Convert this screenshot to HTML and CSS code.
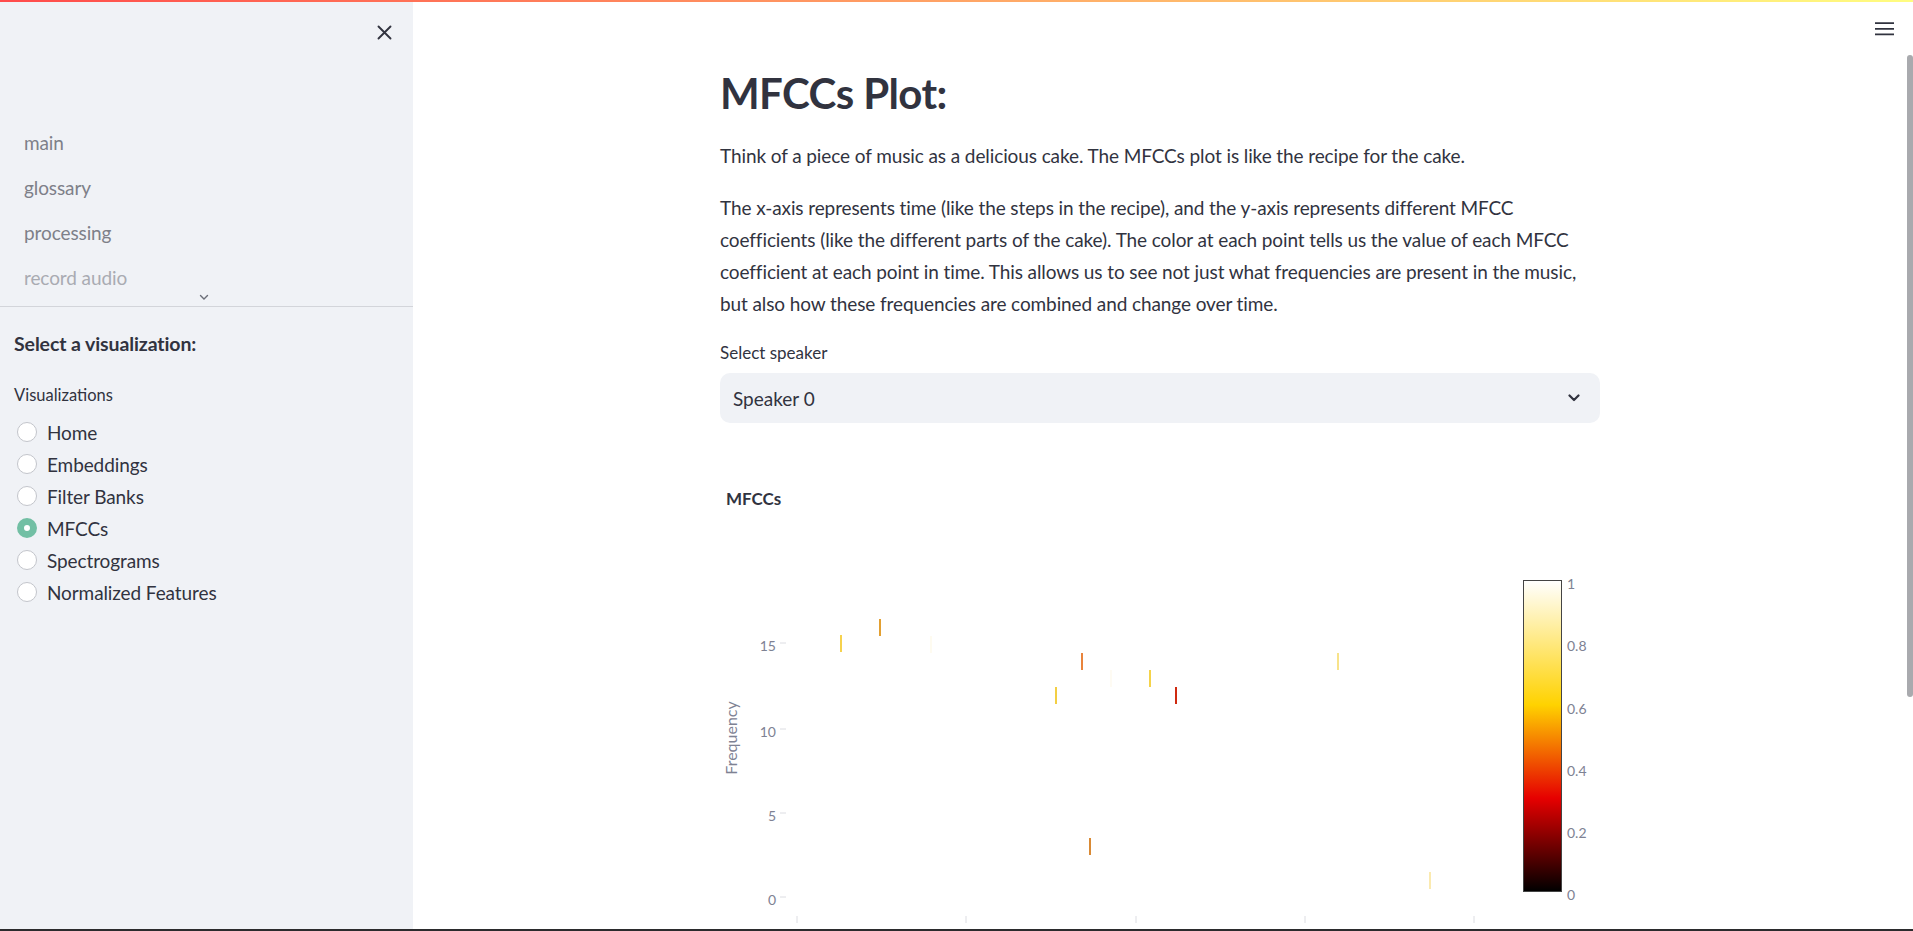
FILE: index.html
```html
<!DOCTYPE html>
<html lang="en">
<head>
<meta charset="utf-8">
<title>MFCCs Plot</title>
<link rel="stylesheet" href="styles.css">
</head>
<body>
<div class="decoration"></div>
<div class="app">
  <aside class="sidebar">
    <div class="sidebar-header">
      <button class="close-btn" aria-label="Close sidebar">
        <svg width="17" height="17" viewBox="0 0 17 17"><path d="M2.5 2.5 L14.5 14.5 M14.5 2.5 L2.5 14.5" stroke="#31333f" stroke-width="1.9" stroke-linecap="round" fill="none"/></svg>
      </button>
    </div>
    <nav class="page-nav">
      <ul>
        <li><a>main</a></li>
        <li><a>glossary</a></li>
        <li><a>processing</a></li>
        <li><a class="faded">record audio</a></li>
      </ul>
      <svg class="nav-more" width="10" height="7" viewBox="0 0 10 7"><path d="M1.5 1.5 L5 5 L8.5 1.5" stroke="#6b6e78" stroke-width="1.4" fill="none" stroke-linecap="round"/></svg>
    </nav>
    <div class="sidebar-content">
      <p class="sidebar-title">Select a visualization:</p>
      <div class="radio-caption">Visualizations</div>
      <div class="radio-group">
        <label class="radio"><span class="circle"></span>Home</label>
        <label class="radio"><span class="circle"></span>Embeddings</label>
        <label class="radio"><span class="circle"></span>Filter Banks</label>
        <label class="radio"><span class="circle checked"></span>MFCCs</label>
        <label class="radio"><span class="circle"></span>Spectrograms</label>
        <label class="radio"><span class="circle"></span>Normalized Features</label>
      </div>
    </div>
  </aside>
  <main class="main">
    <div class="block">
      <h2 class="page-title">MFCCs Plot:</h2>
      <p class="text">Think of a piece of music as a delicious cake. The MFCCs plot is like the recipe for the cake.</p>
      <p class="text">The x-axis represents time (like the steps in the recipe), and the y-axis represents different MFCC coefficients (like the different parts of the cake). The color at each point tells us the value of each MFCC coefficient at each point in time. This allows us to see not just what frequencies are present in the music, but also how these frequencies are combined and change over time.</p>
      <div class="field-label">Select speaker</div>
      <div class="select">
        <span>Speaker 0</span>
        <svg width="12" height="8" viewBox="0 0 12 8"><path d="M1.5 1.5 L6 6 L10.5 1.5" stroke="#31333f" stroke-width="2.2" fill="none" stroke-linecap="round" stroke-linejoin="round"/></svg>
      </div>
      <svg class="chart" width="880" height="480" viewBox="0 0 880 480">
        <defs>
          <linearGradient id="hot" x1="0" y1="1" x2="0" y2="0">
            <stop offset="0" stop-color="#000000"/>
            <stop offset="0.3" stop-color="#e60000"/>
            <stop offset="0.6" stop-color="#ffd200"/>
            <stop offset="1" stop-color="#ffffff"/>
          </linearGradient>
        </defs>
        <text class="chart-title" x="6" y="52">MFCCs</text>
        <g class="ticks">
          <line x1="60" y1="190" x2="66" y2="190"/>
          <line x1="60" y1="276" x2="66" y2="276"/>
          <line x1="60" y1="360" x2="66" y2="360"/>
          <line x1="60" y1="444" x2="66" y2="444"/>
          <line x1="77" y1="463" x2="77" y2="470"/>
          <line x1="246" y1="463" x2="246" y2="470"/>
          <line x1="416" y1="463" x2="416" y2="470"/>
          <line x1="585" y1="463" x2="585" y2="470"/>
          <line x1="754" y1="463" x2="754" y2="470"/>
        </g>
        <g class="axis-label">
          <text x="56" y="198" text-anchor="end">15</text>
          <text x="56" y="284" text-anchor="end">10</text>
          <text x="56" y="368" text-anchor="end">5</text>
          <text x="56" y="452" text-anchor="end">0</text>
        </g>
        <text class="axis-title" x="17" y="285" text-anchor="middle" transform="rotate(-90 17 285)">Frequency</text>
        <g class="cells">
          <rect x="120" y="182" width="2" height="17" fill="#f6d24e"/>
          <rect x="159" y="166" width="2" height="17" fill="#e3a032"/>
          <rect x="210" y="183" width="2" height="17" fill="#fefbf0"/>
          <rect x="335" y="234" width="2" height="17" fill="#f3cf44"/>
          <rect x="361" y="200" width="2" height="17" fill="#e9843c"/>
          <rect x="369" y="385" width="2" height="17" fill="#d98a35"/>
          <rect x="390" y="217" width="2" height="17" fill="#fefbf3"/>
          <rect x="429" y="217" width="2" height="17" fill="#f5d34a"/>
          <rect x="455" y="234" width="2" height="17" fill="#cf2a10"/>
          <rect x="617" y="200" width="2" height="17" fill="#f8e38a"/>
          <rect x="709" y="419" width="2" height="17" fill="#fbeab0"/>
        </g>
        <rect x="803.5" y="127.5" width="38" height="311" fill="url(#hot)" stroke="#444444" stroke-width="1"/>
        <g class="axis-label">
          <text x="847" y="136">1</text>
          <text x="847" y="198">0.8</text>
          <text x="847" y="261">0.6</text>
          <text x="847" y="323">0.4</text>
          <text x="847" y="385">0.2</text>
          <text x="847" y="447">0</text>
        </g>
      </svg>
    </div>
  </main>
</div>
<button class="menu-btn" aria-label="Main menu">
  <svg width="19" height="14" viewBox="0 0 19 14"><path d="M0 1.2 H19 M0 6.8 H19 M0 12.4 H19" stroke="#31333f" stroke-width="1.8" fill="none"/></svg>
</button>
<div class="scroll-thumb"></div>
<div class="screen-edge"></div>
</body>
</html>
```

FILE: styles.css
```css
html, body {
  margin: 0;
  padding: 0;
  height: 100%;
  overflow: hidden;
}

body {
  font-family: "Source Sans Pro", Lato, "Noto Sans", sans-serif;
  color: #31333f;
  background: #ffffff;
}

.decoration {
  position: fixed;
  top: 0;
  left: 0;
  right: 0;
  height: 2px;
  background: linear-gradient(90deg, #ff4b4b, #fffd80);
  z-index: 10;
}

.app {
  display: flex;
  height: 100vh;
}

/* Sidebar */
.sidebar {
  width: 413px;
  flex: 0 0 413px;
  background: #f0f2f6;
  display: flex;
  flex-direction: column;
}

.sidebar-header {
  height: 64px;
  box-sizing: border-box;
  display: flex;
  justify-content: flex-end;
  padding: 24px 20px 0 0;
}

.close-btn {
  border: 0;
  background: none;
  padding: 0;
  width: 17px;
  height: 17px;
  display: block;
}

.close-btn svg {
  display: block;
}

.page-nav {
  position: relative;
  border-bottom: 1px solid #d3d5da;
}

.page-nav ul {
  list-style: none;
  margin: 0;
  padding: 56px 0 6px;
}

.page-nav li {
  height: 45px;
  line-height: 45px;
}

.page-nav a {
  display: block;
  padding-left: 24px;
  font-size: 19px;
  letter-spacing: -0.1px;
  color: #7e8089;
}

.page-nav a.faded {
  color: #a9abb2;
}

.nav-more {
  position: absolute;
  left: 199px;
  bottom: 5px;
}

.sidebar-content {
  padding: 0 14px;
}

.sidebar-title {
  margin: 21px 0 0;
  line-height: 32px;
  font-size: 19.5px;
  font-weight: 700;
  letter-spacing: -0.1px;
}

.radio-caption {
  margin-top: 23px;
  font-size: 16.5px;
  line-height: 24px;
}

.radio-group {
  margin-top: 9px;
  display: flex;
  flex-direction: column;
}

.radio {
  height: 32px;
  display: flex;
  align-items: center;
  padding-left: 3px;
  font-size: 19px;
  letter-spacing: -0.1px;
}

.circle {
  width: 20px;
  height: 20px;
  box-sizing: border-box;
  border-radius: 50%;
  border: 1px solid #c3c5cb;
  background: #ffffff;
  margin-right: 10px;
  flex: 0 0 20px;
}

.circle.checked {
  border: 7px solid #72bfa4;
  background: #ffffff;
}

/* Main */
.main {
  flex: 1;
  display: flex;
  justify-content: center;
  padding-right: 6px;
  overflow: hidden;
}

.block {
  width: 880px;
  padding-top: 66px;
}

.page-title {
  margin: 0 0 20px;
  font-size: 42px;
  line-height: 54px;
  font-weight: 700;
  letter-spacing: -0.6px;
}

.text {
  margin: 0 0 20px;
  font-size: 19px;
  line-height: 32px;
  letter-spacing: -0.1px;
}

.field-label {
  margin-top: 7px;
  font-size: 17px;
  line-height: 26px;
}

.select {
  margin-top: 7px;
  height: 50px;
  box-sizing: border-box;
  background: #f0f2f6;
  border-radius: 10px;
  display: flex;
  align-items: center;
  justify-content: space-between;
  padding: 0 20px 0 13px;
  font-size: 19px;
}

.select svg {
  display: block;
}

.chart {
  display: block;
  margin-top: 30px;
  font-family: "Source Sans Pro", Lato, "Noto Sans", sans-serif;
}

.chart-title {
  font-size: 17px;
  font-weight: 700;
  fill: #31333f;
}

.ticks line {
  stroke: #dcdde2;
  stroke-width: 1;
}

.axis-label text {
  font-size: 14px;
  fill: #7e8293;
}

.axis-title {
  font-size: 16px;
  fill: #7e8293;
}

/* Overlays */
.menu-btn {
  position: fixed;
  top: 22px;
  right: 19px;
  border: 0;
  background: none;
  padding: 0;
  width: 19px;
  height: 14px;
}

.menu-btn svg {
  display: block;
}

.scroll-thumb {
  position: fixed;
  right: 0;
  top: 55px;
  width: 6px;
  height: 642px;
  background: #a9aaae;
  border-radius: 3px;
}

.screen-edge {
  position: fixed;
  left: 0;
  right: 0;
  bottom: 0;
  height: 2px;
  background: #2b2b2d;
}
```
